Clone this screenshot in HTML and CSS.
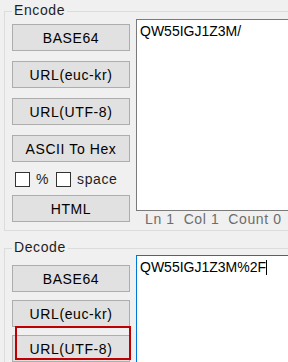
FILE: index.html
```html
<!DOCTYPE html>
<html lang="en">
<head>
    <meta charset="UTF-8">
    <meta name="viewport" content="width=device-width, initial-scale=1.0">
    <title>Encode / Decode</title>
    <link rel="stylesheet" href="styles.css">
</head>
<body>
    <div class="window">
        <fieldset class="group encode">
            <legend>Encode</legend>
            <div class="group-body">
                <div class="buttons">
                    <button class="btn">BASE64</button>
                    <button class="btn">URL(euc-kr)</button>
                    <button class="btn">URL(UTF-8)</button>
                    <button class="btn">ASCII To Hex</button>
                    <div class="options">
                        <span class="check"></span><span class="opt-label">%</span>
                        <span class="check"></span><span class="opt-label">space</span>
                    </div>
                    <button class="btn">HTML</button>
                </div>
                <div class="editor">
                    <div class="textbox">QW55IGJ1Z3M/</div>
                    <div class="status">Ln 1  Col 1  Count 0</div>
                </div>
            </div>
        </fieldset>

        <fieldset class="group decode">
            <legend>Decode</legend>
            <div class="group-body">
                <div class="buttons">
                    <button class="btn">BASE64</button>
                    <button class="btn">URL(euc-kr)</button>
                    <button class="btn">URL(UTF-8)<span class="mark"></span></button>
                </div>
                <div class="editor">
                    <div class="textbox focused">QW55IGJ1Z3M%2F<span class="caret"></span></div>
                </div>
            </div>
        </fieldset>
    </div>
</body>
</html>
```

FILE: styles.css
```css
* {
    margin: 0;
    padding: 0;
    box-sizing: border-box;
}

body {
    background: #f0f0f0;
    font-family: 'Liberation Sans', Arial, sans-serif;
    font-size: 14px;
    line-height: 16px;
    letter-spacing: 0.6px;
    color: #000;
}

.window {
    width: 288px;
    height: 362px;
    overflow: hidden;
}

.group {
    width: 320px;
    margin-left: 4px;
    border: 1px solid #dcdcdc;
    padding: 0 0 3px 7px;
}

.group.encode {
    margin-top: 2px;
}

.group.decode {
    margin-top: 8px;
    padding-bottom: 0;
}

/* extra space under the text puts the frame line lower, like the win32 group box */
.group legend {
    padding: 0 2px 3px;
    line-height: 16px;
    color: #1e1e1e;
}

.group-body {
    display: flex;
    align-items: flex-start;
    margin-top: -2px;
}

.decode .group-body {
    margin-top: -3px;
}

.buttons {
    width: 118px;
    margin-right: 6px;
    display: flex;
    flex-direction: column;
    flex-shrink: 0;
}

.encode .buttons {
    padding-top: 5px;
}

.decode .buttons {
    padding-top: 10px;
}

.btn {
    position: relative;
    width: 118px;
    height: 27px;
    background: #e1e1e1;
    border: 1px solid #adadad;
    font-family: 'Liberation Sans', Arial, sans-serif;
    font-size: 14px;
    font-weight: normal;
    letter-spacing: 0.6px;
    color: #000;
    margin-bottom: 10px;
}

.decode .btn {
    margin-bottom: 8px;
}

.btn:last-child {
    margin-bottom: 0;
}

.options {
    display: flex;
    align-items: center;
    height: 22px;
    margin: -4px 0 5px 3px;
}

.check {
    width: 15px;
    height: 15px;
    background: #fff;
    border: 1px solid #333;
    margin-right: 6px;
}

.opt-label {
    margin-right: 7px;
    color: #1e1e1e;
}

.editor {
    flex: 1;
    display: flex;
    flex-direction: column;
}

.textbox {
    background: #fff;
    border: 1px solid #7a7a7a;
    padding: 3px 3px;
    font-size: 14px;
    line-height: 16px;
    letter-spacing: 0;
    height: 192px;
}

.textbox.focused {
    border-color: #0078d7;
    height: 120px;
}

.caret {
    display: inline-block;
    width: 1px;
    height: 15px;
    background: #000;
    vertical-align: -3px;
}

.status {
    padding-left: 9px;
    color: #6d6d6d;
    white-space: pre;
    line-height: 16px;
}

/* red annotation frame drawn over the button */
.mark {
    position: absolute;
    left: 2px;
    top: -10px;
    width: 116px;
    height: 34px;
    border: 2px solid #c00000;
    pointer-events: none;
}
```
